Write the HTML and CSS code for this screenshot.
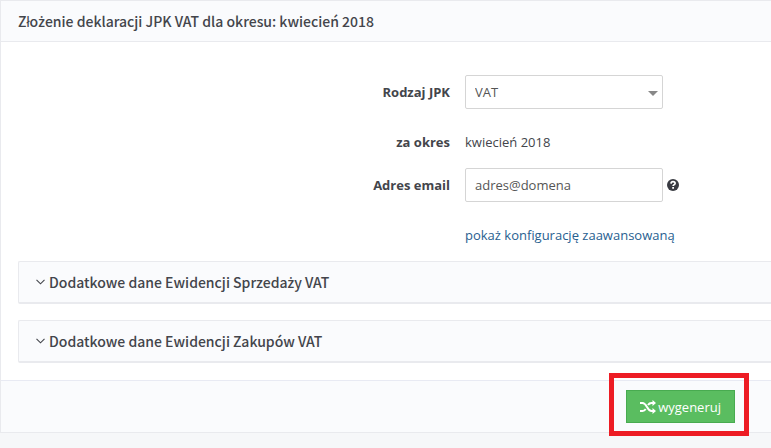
FILE: index.html
```html
<!DOCTYPE html>
<html lang="pl">
<head>
<meta charset="utf-8">
<meta name="viewport" content="width=device-width, initial-scale=1">
<title>Deklaracja JPK VAT</title>
<link rel="stylesheet" href="styles.css">
</head>
<body>
<form class="panel">
  <header class="panel-header">
    <h1 class="title"><span>Zło<span class="accent">ż</span>enie deklaracji JPK VAT dla okresu: kwiecień 2018</span></h1>
  </header>
  <div class="panel-body">
    <div class="fields">
      <label class="label" for="type">Rodzaj JPK</label>
      <div class="field select-wrap">
        <select class="control" id="type"><option>VAT</option></select>
        <svg class="caret" viewBox="0 0 10 5" aria-hidden="true"><path d="M0 0h10L5 5z"/></svg>
      </div>
      <span class="label plain">za okres</span>
      <span class="field plain">kwiecień 2018</span>
      <label class="label" for="email">Adres email</label>
      <div class="field with-help">
        <input class="control" id="email" type="text" value="adres@domena">
        <svg class="help" viewBox="0 0 12 12" aria-hidden="true">
          <circle cx="6" cy="6" r="6"/>
          <path d="M4 4.600C4.100 3.300 4.900 2.700 6 2.700c1.200 0 2.100.7 2.100 1.700C8.100 5.600 6.100 5.600 6.100 7.100"/>
          <path d="M5.200 8.900h1.800"/>
        </svg>
      </div>
      <a class="field link" href="#">pokaż konfigurację zaawansowaną</a>
    </div>
    <section class="section">
      <h2 class="title">
        <svg class="chevron" viewBox="0 0 9 6" aria-hidden="true"><path d="M.5.8l4 4 4-4"/></svg>
        <span>Dodatkowe dane Ewidencji Sprzeda<span class="accent">ż</span>y VAT</span>
      </h2>
    </section>
    <section class="section">
      <h2 class="title">
        <svg class="chevron" viewBox="0 0 9 6" aria-hidden="true"><path d="M.5.8l4 4 4-4"/></svg>
        <span>Dodatkowe dane Ewidencji Zakupów VAT</span>
      </h2>
    </section>
  </div>
  <footer class="panel-footer">
    <div class="highlight">
      <button class="submit" type="button">
        <svg class="shuffle" viewBox="0 0 16 14" aria-hidden="true">
          <path class="stroke" d="M0 3h2.500c4.500 0 4.500 8 9 8H13M0 11h2.500c1.500 0 2.500-.9 3.200-2M8 5c.8-1.200 1.800-2 3.500-2H13"/>
          <path class="head" d="M12.500 0L16 3l-3.500 3zM12.500 8L16 11l-3.500 3z"/>
        </svg>wygeneruj
      </button>
    </div>
  </footer>
</form>
</body>
</html>
```
FILE: styles.css
```css
* {
  box-sizing: border-box;
}

body {
  margin: 0;
  padding-bottom: 16px;
  background: #f6f7f9;
  color: #43454b;
  font: 13px/20px "Open Sans", sans-serif;
}

.panel {
  background: #fff;
  border: 1px solid #e9eaee;
  border-right: 0;
}

.panel-header {
  padding: 10px 17px;
  background: #fafbfd;
  border-bottom: 1px solid #e9eaee;
}

.title {
  display: flex;
  align-items: center;
  gap: 4px;
  margin: 0;
  font: 500 14px/20px "Noto Sans CJK SC", sans-serif;
}

.accent {
  font-family: "Open Sans", sans-serif;
  font-weight: 600;
  line-height: 1;
}

.panel-body {
  padding: 33px 0 17px 17px;
}

.fields {
  display: grid;
  grid-template-columns: minmax(0, 24fr) minmax(0, 17fr);
  gap: 16px 15px;
  align-items: center;
}

.label {
  padding: 7px 0;
  font-weight: 700;
  text-align: right;
}

.field {
  grid-column: 2;
}

.plain {
  padding: 7px 0 0;
}

.link {
  padding: 7px 0;
  color: #286090;
  text-decoration: none;
}

.select-wrap {
  position: relative;
  width: 198px;
}

.control {
  display: block;
  width: 198px;
  height: 34px;
  padding: 0 9px;
  appearance: none;
  background: #fff;
  border: 1px solid #d5d5d5;
  border-radius: 2px;
  color: #555;
  font: inherit;
}

.caret {
  position: absolute;
  top: 16px;
  right: 5px;
  width: 10px;
  height: 5px;
  fill: #888;
}

.with-help {
  display: flex;
  align-items: center;
  gap: 4px;
}

.help {
  width: 12px;
  height: 12px;
  fill: #393b42;
}

.help path {
  fill: none;
  stroke: #fff;
  stroke-width: 1.7;
}

.section {
  margin-top: 16px;
  padding: 10px 17px;
  background: #fafbfd;
  border: 1px solid #e9eaee;
  border-right: 0;
  border-bottom-width: 2px;
  border-radius: 2px 0 0 2px;
}

.fields + .section {
  margin-top: 9px;
}

.chevron {
  width: 9px;
  height: 6px;
  fill: none;
  stroke: #43454b;
  stroke-width: 1.1;
}

.panel-footer {
  display: flex;
  justify-content: flex-end;
  padding: 9px 36px;
  background: #fafbfd;
  border-top: 1px solid #e8eaf3;
}

.highlight {
  position: relative;
}

.highlight::after {
  content: "";
  position: absolute;
  inset: -17px -14px -13px -17px;
  border: 5px solid #ed1c24;
  pointer-events: none;
}

.submit {
  display: flex;
  align-items: center;
  height: 33px;
  padding: 0 13px;
  background: #5abd60;
  border: 1px solid #48ab50;
  color: #fff;
  font: inherit;
}

.shuffle {
  width: 16px;
  height: 14px;
  margin-right: 2px;
}

.shuffle .stroke {
  fill: none;
  stroke: #fff;
  stroke-width: 2;
}

.shuffle .head {
  fill: #fff;
}
```
